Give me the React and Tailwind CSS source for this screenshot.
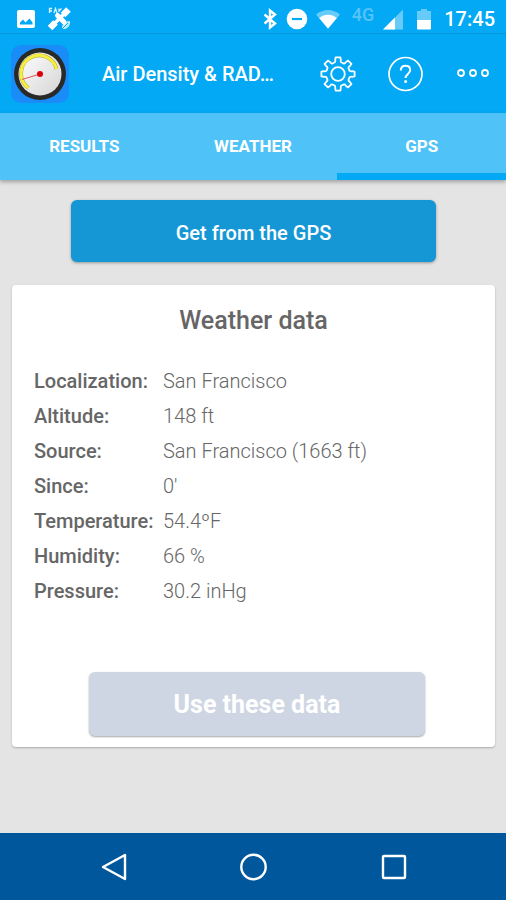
const rows = [
  ['Localization:', 'San Francisco'],
  ['Altitude:', '148 ft'],
  ['Source:', 'San Francisco (1663 ft)'],
  ['Since:', "0'"],
  ['Temperature:', '54.4ºF'],
  ['Humidity:', '66 %'],
  ['Pressure:', '30.2 inHg'],
];

function polar(angle, dx, r) {
  const c = Math.cos(angle);
  const s = Math.sin(angle);
  return `${(18 + dx * c + r * s).toFixed(2)} ${(18 + dx * s - r * c).toFixed(2)}`;
}

// Eight flat teeth joined by rounded valleys.
const gearPath =
  Array.from({ length: 8 }, (_, k) => {
    const a = (k * Math.PI) / 4;
    const next = ((k + 1) * Math.PI) / 4;
    const mid = a + Math.PI / 8;
    return `${k ? 'L' : 'M'}${polar(a, -2.4, 16.6)} L${polar(a, 2.4, 16.6)} L${polar(a, 2.8, 14)} Q${polar(mid, -2.2, 11.2)} ${polar(mid, 0, 12)} Q${polar(mid, 2.2, 11.2)} ${polar(next, -2.8, 14)}`;
  }).join(' ') + 'Z';

function StatusBar() {
  return (
    <div className="flex h-[33px] items-center justify-between pl-4 pr-[11px] pt-1">
      <div className="flex items-center gap-3">
        <svg width="20" height="20" viewBox="0 0 20 20" aria-hidden="true">
          <rect x="1" y="1" width="18" height="18" rx="2" fill="#fff" />
          <path d="M4 15.500v-2l3-3 2.500 3 4-4 3 4v2z" fill="#03a9f4" />
        </svg>
        <svg width="24" height="24" viewBox="0 0 24 24" fill="none" stroke="#fff" aria-hidden="true">
          <path d="M20.500 2.500L15 8M7.500 15.500L2 21" strokeWidth="6.500" />
          <path d="M15.500 7.500L7 16" strokeWidth="3.500" />
          <path d="M9.500 8.500l6.500 6.500" strokeWidth="5" strokeLinecap="round" />
          <path d="M14 22c-.5-5 3-8 8-8 .5 5-2.500 8.500-8 8z" fill="#fff" stroke="none" opacity=".75" />
          <path d="M14 22l6-6" stroke="#03a9f4" strokeWidth="1" />
          <path d="M1.500 6V1.500H4M1.500 4H4M6 6l1.500-4.500L9 6M11 1.500V5M13.500 1.500L11.500 3.500" strokeWidth="1.300" opacity=".85" />
        </svg>
      </div>
      <div className="flex items-center">
        <svg width="16" height="22" viewBox="0 0 16 22" fill="none" stroke="#fff" strokeWidth="2.400" aria-hidden="true">
          <path d="M2.500 6.500L13 15.500 8 19.500v-17L13 6.500 2.500 15.500" />
        </svg>
        <svg className="ml-2" width="22" height="22" viewBox="0 0 22 22" aria-hidden="true">
          <circle cx="11" cy="11" r="10.300" fill="#fff" />
          <path d="M6 11h10" stroke="#03a9f4" strokeWidth="2.200" />
        </svg>
        <svg className="ml-2" width="24" height="20" viewBox="0 0 24 20" aria-hidden="true">
          <path d="M0 5.500C7-.5 17-.5 24 5.500L12 20z" fill="#fff" opacity=".4" />
          <path d="M3.200 9C8 4.500 16 4.500 20.800 9L12 19.500z" fill="#fff" />
        </svg>
        <span className="ml-3 pb-2 text-lg leading-5 font-medium text-[#56c4f8]">4G</span>
        <svg className="ml-2" width="22" height="22" viewBox="0 0 22 22" aria-hidden="true">
          <path d="M1 21.500L21 1.500v20z" fill="#fff" opacity=".4" />
          <path d="M1 21.500L13 9.500v12z" fill="#fff" />
        </svg>
        <svg className="ml-3" width="16" height="22" viewBox="0 0 16 22" aria-hidden="true">
          <path d="M1 3h4V1h6v2h4v9H1z" fill="#fff" opacity=".4" />
          <path d="M1 12h14v8.500a1 1 0 0 1-1 1H2a1 1 0 0 1-1-1z" fill="#fff" />
        </svg>
        <span className="ml-3 text-xl leading-5 font-medium">17:45</span>
      </div>
    </div>
  );
}

function AppLogo() {
  return (
    <svg width="60" height="60" viewBox="0 0 60 60" role="img" aria-label="Air Density">
      <defs>
        <linearGradient id="face" x1="0" y1="0" x2="1" y2="1">
          <stop offset="0" stopColor="#fff" />
          <stop offset="1" stopColor="#d4d4d4" />
        </linearGradient>
      </defs>
      <rect x="1" y="1" width="58" height="58" rx="10" fill="#1a8cf8" />
      <circle cx="30" cy="30" r="26" fill="#292a28" />
      <circle cx="30" cy="30" r="21.500" fill="url(#face)" />
      <path d="M18.500 44A18 18 0 1 1 46.500 25" fill="none" stroke="#a5a03a" strokeWidth="3.800" />
      <path d="M18.500 44A18 18 0 1 1 46.500 25" fill="none" stroke="#f7ef3c" strokeWidth="3" />
      <path d="M30 30L12 35.500" stroke="#e8525c" strokeWidth="1" />
      <circle cx="30" cy="30" r="3" fill="#d8000c" />
    </svg>
  );
}

function Header() {
  return (
    <header className="flex h-20 items-center border-t border-[#0599dc] pl-[10px] pr-4">
      <AppLogo />
      <h1 className="ml-8 min-w-0 flex-1 truncate text-xl font-medium">Air Density &amp; RAD…</h1>
      <div className="flex items-center gap-8">
        <button type="button" aria-label="Settings">
          <svg width="36" height="36" viewBox="0 0 36 36" fill="none" stroke="#fff" strokeWidth="1.800" strokeLinejoin="round">
            <path d={gearPath} />
            <circle cx="18" cy="18" r="6.800" />
          </svg>
        </button>
        <button type="button" aria-label="Help">
          <svg width="36" height="36" viewBox="0 0 36 36" fill="none" stroke="#fff" strokeWidth="1.700">
            <circle cx="17.500" cy="18" r="16.500" />
            <path d="M12.800 14.500c0-3 1.900-4.800 4.700-4.800s4.700 1.700 4.700 4.400c0 4-4.600 3.900-4.600 8" strokeWidth="2" />
            <circle cx="17.600" cy="25.500" r="1.500" fill="#fff" stroke="none" />
          </svg>
        </button>
        <button type="button" aria-label="More">
          <svg width="34" height="36" viewBox="0 0 34 36" fill="none" stroke="#fff" strokeWidth="1.800">
            <circle cx="5" cy="17" r="3" />
            <circle cx="17" cy="17" r="3" />
            <circle cx="29" cy="17" r="3" />
          </svg>
        </button>
      </div>
    </header>
  );
}

function Tab({ label, active }) {
  return (
    <button
      type="button"
      role="tab"
      aria-selected={active}
      className={`border-y-[7px] border-t-transparent pt-px text-[17px] font-bold ${active ? 'border-b-[#03a9f4]' : 'border-b-transparent'}`}
    >
      {label}
    </button>
  );
}

export default function App() {
  return (
    <div className="flex min-h-screen flex-col bg-[#e4e4e4] font-[Roboto,sans-serif]">
      <div className="bg-[#03a9f4] text-white">
        <StatusBar />
        <Header />
      </div>
      <div role="tablist" className="grid h-[67px] grid-cols-3 bg-[#4fc3f7] text-white shadow-[0_2px_4px_rgba(0,0,0,0.3)]">
        <Tab label="RESULTS" active={false} />
        <Tab label="WEATHER" active={false} />
        <Tab label="GPS" active />
      </div>
      <main className="flex flex-1 flex-col pt-5 pr-[11px] pl-3">
        <button
          type="button"
          className="mx-[59px] h-[62px] rounded-md bg-[#1697d5] pt-1 text-xl font-medium text-white shadow-[0_1px_3px_rgba(0,0,0,0.35)]"
        >
          Get from the GPS
        </button>
        <section className="mt-[23px] flex flex-col rounded bg-white px-[22px] pt-5 pb-[11px] text-[#666] shadow-[0_1px_2px_rgba(0,0,0,0.25)]">
          <h2 className="text-center text-[25px] leading-8 font-medium">Weather data</h2>
          <table className="mt-[26px] text-left text-xl">
            <tbody>
              {rows.map(([name, value]) => (
                <tr key={name} className="h-[35px]">
                  <th scope="row" className="w-[129px] p-0 font-medium">{name}</th>
                  <td className="p-0 font-light">{value}</td>
                </tr>
              ))}
            </tbody>
          </table>
          <button
            type="button"
            className="mt-16 mr-12 ml-[55px] h-16 rounded-md bg-[#ced5e3] pt-0.5 text-[25px] font-bold text-white shadow-[0_1px_2px_rgba(0,0,0,0.35)]"
          >
            Use these data
          </button>
        </section>
      </main>
      <nav className="flex h-[67px] items-center justify-center gap-[108px] bg-[#01579b]">
        <button type="button" aria-label="Back">
          <svg width="32" height="32" viewBox="0 0 32 32" fill="none" stroke="#fff" strokeWidth="2.400" strokeLinejoin="round">
            <path d="M28 4v24L6 16z" />
          </svg>
        </button>
        <button type="button" aria-label="Home">
          <svg width="32" height="32" viewBox="0 0 32 32" fill="none" stroke="#fff" strokeWidth="2.400">
            <circle cx="16.500" cy="16" r="12.200" />
          </svg>
        </button>
        <button type="button" aria-label="Recent apps">
          <svg width="32" height="32" viewBox="0 0 32 32" fill="none" stroke="#fff" strokeWidth="2.400">
            <rect x="6" y="5" width="22" height="22" rx="1" />
          </svg>
        </button>
      </nav>
    </div>
  );
}
